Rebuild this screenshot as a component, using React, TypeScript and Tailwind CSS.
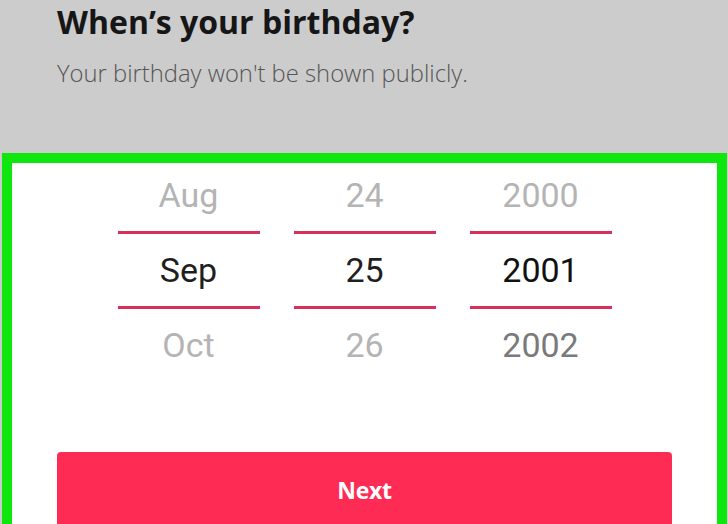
import React from "react";

const cols = [
  { items: ["Aug", "Sep", "Oct"], colors: ["text-[#b4b4b4]", "text-[#1f1f1f]", "text-[#b4b4b4]"] },
  { items: ["24", "25", "26"], colors: ["text-[#b4b4b4]", "text-[#1f1f1f]", "text-[#b4b4b4]"] },
  { items: ["2000", "2001", "2002"], colors: ["text-[#b4b4b4]", "text-[#111111]", "text-[#7a7a7a]"] },
];

function Column({ items, colors }: { items: string[]; colors: string[] }) {
  return (
    <div className="w-[142px] flex flex-col items-stretch">
      <div className={`h-[68px] pb-[4px] flex items-center justify-center text-[34px] leading-none ${colors[0]}`}>
        {items[0]}
      </div>
      <div className="h-[3px] bg-[#d8305a]" />
      <div className={`h-[72px] flex items-center justify-center text-[34px] leading-none ${colors[1]}`}>
        {items[1]}
      </div>
      <div className="h-[3px] bg-[#d8305a]" />
      <div className={`h-[72px] flex items-center justify-center text-[34px] leading-none ${colors[2]}`}>
        {items[2]}
      </div>
    </div>
  );
}

export default function App() {
  return (
    <div className="w-[728px] h-[524px] overflow-hidden bg-[#cccccc] flex flex-col">
      <div className="px-[57px] pt-[2px] h-[153px]">
        <h1 className="text-[32px] leading-[40px] font-bold text-[#161616] font-['Open_Sans','Liberation_Sans',sans-serif]">
          When’s your birthday?
        </h1>
        <p className="mt-[16px] text-[23.8px] leading-[30px] font-light text-[#555555] font-['Open_Sans','Liberation_Sans',sans-serif]">
          Your birthday won't be shown publicly.
        </p>
      </div>
      <div className="flex-1 ml-[2px] mr-[1px] border-[10px] border-b-0 border-[#0ee60e] bg-white flex flex-col overflow-hidden">
        <div className="flex justify-center gap-[34px] font-['Roboto','Liberation_Sans',sans-serif]">
          {cols.map((c, i) => (
            <Column key={i} items={c.items} colors={c.colors} />
          ))}
        </div>
        <div className="mt-[71px] mx-[45px] h-[76px] shrink-0 bg-[#fe2c55] rounded-[4px] flex items-center justify-center">
          <span className="text-white text-[23px] font-bold tracking-[-0.3px] font-['Open_Sans','Liberation_Sans',sans-serif]">Next</span>
        </div>
      </div>
    </div>
  );
}
